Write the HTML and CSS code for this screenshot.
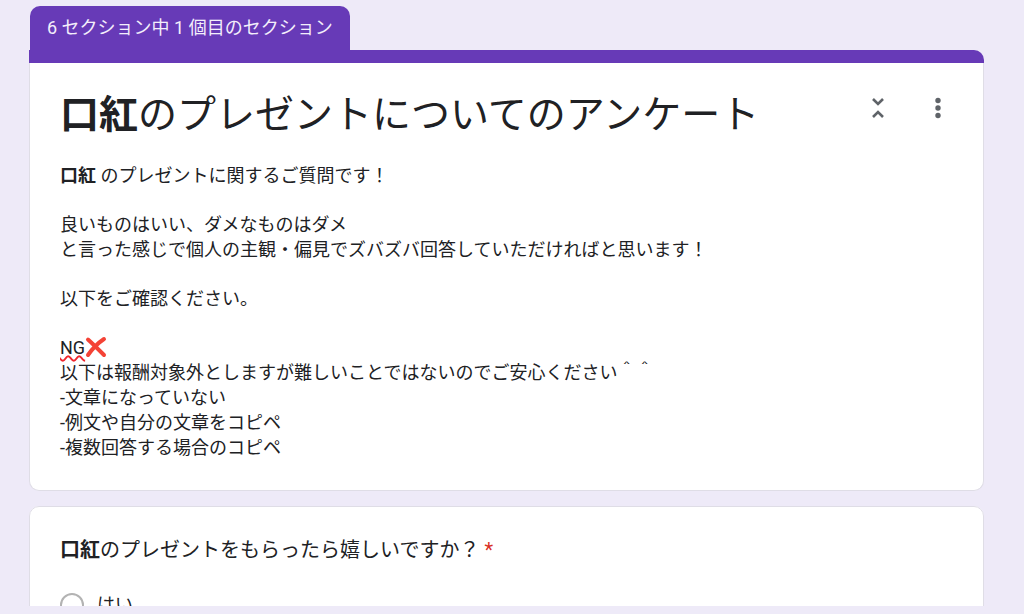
FILE: index.html
```
<!DOCTYPE html>
<html lang="ja">
<head>
    <meta charset="utf-8">
    <meta name="viewport" content="width=device-width, initial-scale=1">
    <title>口紅のプレゼントについてのアンケート</title>
    <link rel="stylesheet" href="styles.css">
</head>
<body>
    <main class="form">
        <section class="section">
            <div class="section-tab">6 セクション中 1 個目のセクション</div>
            <div class="section-bar"></div>
            <div class="card intro">
                <header class="intro-header">
                    <h1><b>口紅</b>のプレゼントについてのアンケート</h1>
                    <div class="actions">
                        <button type="button" class="icon-button" aria-label="セクションを折りたたむ">
                            <svg viewBox="0 0 32 32" width="32" height="32">
                                <path d="M11 7l5 5 5-5M11 25l5-5 5 5" fill="none" stroke="#5f6368" stroke-width="2.600"/>
                            </svg>
                        </button>
                        <button type="button" class="icon-button" aria-label="その他のオプション">
                            <svg viewBox="0 0 32 32" width="32" height="32" fill="#5f6368">
                                <circle cx="16" cy="8.500" r="2.700"/>
                                <circle cx="16" cy="16" r="2.700"/>
                                <circle cx="16" cy="23.500" r="2.700"/>
                            </svg>
                        </button>
                    </div>
                </header>
                <div class="description">
                    <p><b>口紅</b> のプレゼントに関するご質問です！</p>
                    <p>良いものはいい、ダメなものはダメ<br>と言った感じで個人の主観・偏見でズバズバ回答していただければと思います！</p>
                    <p>以下をご確認ください。</p>
                    <p><span class="misspelled">NG</span><svg class="cross" viewBox="0 0 22 22" width="22" height="22" role="img" aria-label="バツ"><path d="M3 3.500Q9 9 19 19M19 3Q10 9 3 19" fill="none" stroke="#f44336" stroke-width="4" stroke-linecap="round"/></svg><br>以下は報酬対象外としますが難しいことではないのでご安心ください＾＾<br>-文章になっていない<br>-例文や自分の文章をコピペ<br>-複数回答する場合のコピペ</p>
                </div>
            </div>
        </section>
        <fieldset class="card question">
            <legend><b>口紅</b>のプレゼントをもらったら嬉しいですか？ <span class="required">*</span></legend>
            <label class="option">
                <input type="radio" name="happy" value="yes">
                はい
            </label>
        </fieldset>
    </main>
</body>
</html>
```
FILE: styles.css
```
* {
    box-sizing: border-box;
}
body {
    display: flex;
    flex-direction: column;
    height: 100vh;
    margin: 0;
    padding: 6px 40px 8px 29px;
    overflow: hidden;
    background-color: #eeeaf8;
    color: #202124;
    font-family: Roboto, "Noto Sans CJK JP", sans-serif;
    font-size: 18px;
    line-height: 25px;
}
.form {
    flex: 1;
    min-height: 0;
    overflow: hidden;
}
.section {
    margin-bottom: 15px;
}
.section-tab {
    width: fit-content;
    margin-left: 1px;
    padding: 9px 17px 10px;
    border-radius: 10px 10px 0 0;
    background-color: #673ab7;
    color: #f3eefb;
}
.section-bar {
    height: 13px;
    border-radius: 0 10px 0 0;
    background-color: #673ab7;
}
.card {
    border: 1px solid #dfdde6;
    border-radius: 10px;
    background-color: white;
}
.intro {
    padding: 26px 29px 30px 30px;
    border-top: none;
    border-radius: 0 0 10px 10px;
}
.intro-header {
    display: flex;
    justify-content: space-between;
    align-items: flex-start;
}
h1 {
    margin: 0;
    font-size: 39px;
    font-weight: 400;
    line-height: 52px;
}
.actions {
    display: flex;
    gap: 28px;
    margin-top: 3px;
}
.icon-button {
    width: 32px;
    height: 32px;
    padding: 0;
    border: none;
    background: none;
    cursor: pointer;
}
.icon-button svg {
    display: block;
}
.description {
    margin-top: 22px;
}
.description p {
    margin: 0 0 24px;
}
.description p:last-child {
    margin-bottom: 0;
}
.misspelled {
    text-decoration: underline wavy #f0262d 2px;
    text-decoration-skip-ink: none;
}
.cross {
    vertical-align: -4px;
}
.question {
    min-width: 0;
    margin: 0;
    padding: 28px 30px;
}
.question legend {
    float: left;
    width: 100%;
    padding: 0;
    font-size: 20px;
    line-height: 30px;
}
.required {
    color: #d93025;
}
.option {
    display: flex;
    align-items: center;
    gap: 13px;
    clear: both;
    padding-top: 27px;
}
.option input {
    appearance: none;
    width: 24px;
    height: 24px;
    margin: 0;
    border: 2px solid #b3b3b3;
    border-radius: 50%;
}
```
